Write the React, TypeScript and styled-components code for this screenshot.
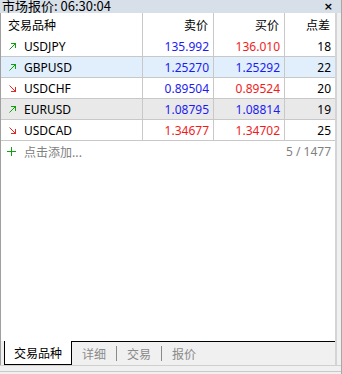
import { createGlobalStyle } from 'styled-components';
import styled from 'styled-components';
import { Fragment } from 'react';

const GlobalStyle = createGlobalStyle`
  html, body {
    margin: 0;
    padding: 0;
    background: #f0f0f0;
  }
  body {
    font-family: "Noto Sans", "Noto Sans CJK SC", sans-serif;
  }
`;

const Window = styled.div`
  width: 342px;
  height: 374px;
  display: flex;
  flex-direction: column;
  background: #f0f0f0;
  overflow: hidden;
  box-sizing: border-box;
  border-right: 1px solid #a8a8a8;
`;

const TitleBar = styled.div`
  height: 13px;
  flex-shrink: 0;
  display: flex;
  align-items: flex-start;
  justify-content: space-between;
  background: #d7dfe9;
  overflow: hidden;
  padding: 0 8px 0 2px;
`;

const TitleText = styled.div`
  font-family: "Noto Sans CJK SC", sans-serif;
  font-size: 13px;
  line-height: 13px;
  margin-top: -1px;
  color: #000;
`;

const CloseMark = styled.div`
  font-family: "DejaVu Sans", sans-serif;
  font-size: 11px;
  font-weight: 700;
  line-height: 13px;
  color: #000;
`;

const Panel = styled.div`
  flex: 1;
  display: flex;
  flex-direction: column;
  background: #fff;
  margin-right: 4px;
  border-left: 1px solid #a0a0a0;
  border-right: 2px solid #d4d4d4;
  min-height: 0;
`;

const Table = styled.div`
  display: grid;
  grid-template-columns: 142px 71px 71px 1fr;
`;

const HeadCell = styled.div<{ $align?: 'left' | 'right' }>`
  height: 23px;
  box-sizing: border-box;
  display: flex;
  align-items: center;
  justify-content: ${(p) => (p.$align === 'left' ? 'flex-start' : 'flex-end')};
  padding: ${(p) => (p.$align === 'left' ? '0 0 0 7px' : '0 5px 0 0')};
  border-right: 1px solid #c8c8c8;
  font-family: "Noto Sans CJK SC", sans-serif;
  font-size: 12px;
  color: #000;
  &:nth-child(4n) {
    border-right: none;
  }
`;

const Cell = styled.div<{ $bg: string; $color?: string; $first?: boolean; $last?: boolean }>`
  height: 21px;
  box-sizing: border-box;
  display: flex;
  align-items: center;
  justify-content: ${(p) => (p.$first ? 'flex-start' : 'flex-end')};
  padding: ${(p) => (p.$first ? '0 0 0 8px' : '0 4px 0 0')};
  gap: 8px;
  background: ${(p) => p.$bg};
  border-bottom: 1px solid #c8c8c8;
  border-right: ${(p) => (p.$last ? 'none' : '1px solid #c8c8c8')};
  font-size: 12px;
  color: ${(p) => p.$color || '#000'};
`;

const AddRow = styled.div`
  height: 21px;
  display: flex;
  align-items: center;
  justify-content: space-between;
  padding: 0 4px 0 6px;
  font-size: 12px;
  color: #808080;
`;

const AddLabel = styled.div`
  display: flex;
  align-items: center;
  gap: 8px;
  font-family: "Noto Sans CJK SC", sans-serif;
`;

const Filler = styled.div`
  flex: 1;
`;

const TabBar = styled.div`
  height: 24px;
  flex-shrink: 0;
  display: flex;
  align-items: stretch;
  background: #f0f0f0;
  border-left: 1px solid #a0a0a0;
  margin-right: 4px;
  border-right: 2px solid #d4d4d4;
  padding-left: 3px;
`;

const TabLine = styled.div`
  flex: 1;
  border-top: 1px solid #000;
  display: flex;
  align-items: center;
  padding-left: 10px;
  gap: 10px;
`;

const ActiveTab = styled.div`
  width: 68px;
  box-sizing: border-box;
  display: flex;
  align-items: center;
  justify-content: center;
  background: #fff;
  border: 1px solid #000;
  border-top: none;
  font-family: "Noto Sans CJK SC", sans-serif;
  font-size: 12px;
  color: #000;
`;

const Tab = styled.div`
  font-family: "Noto Sans CJK SC", sans-serif;
  font-size: 12px;
  color: #8a8a8a;
`;

const TabSep = styled.div`
  width: 1px;
  height: 15px;
  background: #8a8a8a;
`;

const BottomEdge = styled.div`
  height: 7px;
  flex-shrink: 0;
  border-top: 1px solid #d0d0d0;
  border-bottom: 1px solid #c8c8c8;
  box-sizing: border-box;
  margin-bottom: 2px;
`;

type Quote = { sym: string; up: boolean; bid: string; ask: string; bidRed: boolean; askRed: boolean; spread: number };

const quotes: Quote[] = [
  { sym: 'USDJPY', up: true, bid: '135.992', ask: '136.010', bidRed: false, askRed: true, spread: 18 },
  { sym: 'GBPUSD', up: true, bid: '1.25270', ask: '1.25292', bidRed: false, askRed: false, spread: 22 },
  { sym: 'USDCHF', up: false, bid: '0.89504', ask: '0.89524', bidRed: false, askRed: true, spread: 20 },
  { sym: 'EURUSD', up: true, bid: '1.08795', ask: '1.08814', bidRed: false, askRed: false, spread: 19 },
  { sym: 'USDCAD', up: false, bid: '1.34677', ask: '1.34702', bidRed: true, askRed: true, spread: 25 },
];

const rowBg = ['#ffffff', '#e1effc', '#ffffff', '#e9e9e9', '#ffffff'];

const BLUE = '#1c1cf0';
const RED = '#f01c1c';

function Arrow({ up }: { up: boolean }) {
  const color = up ? '#12a012' : '#e02828';
  return (
    <svg width="7" height="7" viewBox="0 0 7 7" shapeRendering="crispEdges">
      {up ? (
        <g stroke={color} strokeWidth="1" fill="none">
          <path d="M0.5 6.5 L6.5 0.5" shapeRendering="auto" />
          <path d="M2 0.5 H6.5 V5" />
        </g>
      ) : (
        <g stroke={color} strokeWidth="1" fill="none">
          <path d="M0.5 0.5 L6.5 6.5" shapeRendering="auto" />
          <path d="M2 6.5 H6.5 V2" />
        </g>
      )}
    </svg>
  );
}

function Plus() {
  return (
    <svg width="9" height="9" viewBox="0 0 9 9" shapeRendering="crispEdges">
      <path d="M4.5 0 V9 M0 4.5 H9" stroke="#12a012" strokeWidth="1" />
    </svg>
  );
}

export default function App() {
  return (
    <>
      <GlobalStyle />
      <Window>
        <TitleBar>
          <TitleText>市场报价: 06:30:04</TitleText>
          <CloseMark>×</CloseMark>
        </TitleBar>
        <Panel>
          <Table>
            <HeadCell $align="left">交易品种</HeadCell>
            <HeadCell>卖价</HeadCell>
            <HeadCell>买价</HeadCell>
            <HeadCell>点差</HeadCell>
            {quotes.map((q, i) => (
              <Fragment key={q.sym}>
                <Cell $bg={rowBg[i]} $first>
                  <Arrow up={q.up} />
                  {q.sym}
                </Cell>
                <Cell $bg={rowBg[i]} $color={q.bidRed ? RED : BLUE}>
                  {q.bid}
                </Cell>
                <Cell $bg={rowBg[i]} $color={q.askRed ? RED : BLUE}>
                  {q.ask}
                </Cell>
                <Cell $bg={rowBg[i]} $last>
                  {q.spread}
                </Cell>
              </Fragment>
            ))}
          </Table>
          <AddRow>
            <AddLabel>
              <Plus />
              点击添加...
            </AddLabel>
            <span>5 / 1477</span>
          </AddRow>
          <Filler />
        </Panel>
        <TabBar>
          <ActiveTab>交易品种</ActiveTab>
          <TabLine>
            <Tab>详细</Tab>
            <TabSep />
            <Tab>交易</Tab>
            <TabSep />
            <Tab>报价</Tab>
          </TabLine>
        </TabBar>
        <BottomEdge />
      </Window>
    </>
  );
}
